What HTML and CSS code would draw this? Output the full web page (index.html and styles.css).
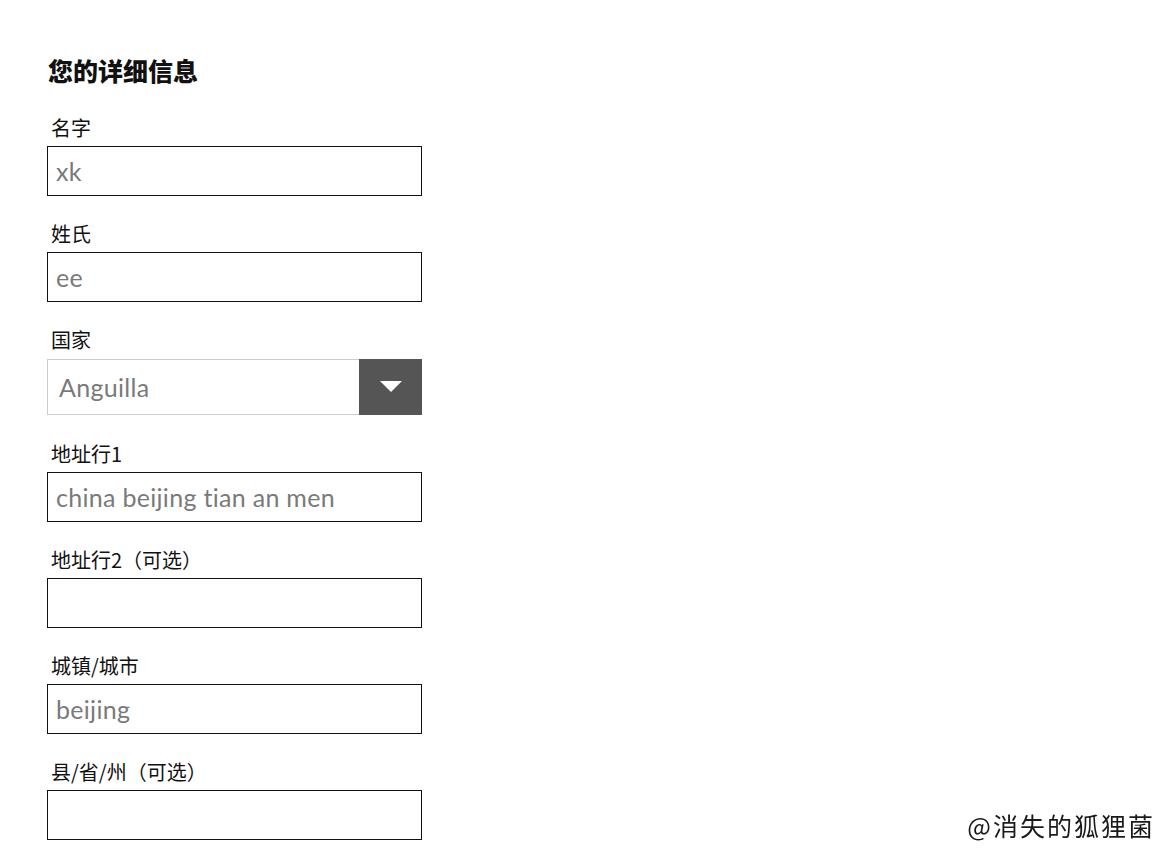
FILE: index.html
```html
<!DOCTYPE html>
<html lang="zh-CN">
<head>
  <meta charset="UTF-8">
  <meta name="viewport" content="width=device-width, initial-scale=1.0">
  <title>您的详细信息</title>
  <link rel="stylesheet" href="styles.css">
</head>
<body>
  <form class="details">
    <h2>您的详细信息</h2>

    <div class="field">
      <label for="firstName">名字</label>
      <input type="text" id="firstName" value="xk">
    </div>

    <div class="field">
      <label for="lastName">姓氏</label>
      <input type="text" id="lastName" value="ee">
    </div>

    <div class="field field-select">
      <label for="country">国家</label>
      <div class="select-box">
        <select id="country">
          <option>Anguilla</option>
          <option>China</option>
        </select>
        <span class="arrow">
          <svg width="22" height="12" viewBox="0 0 22 12"><path d="M0 0 H22 L11 11 Z" fill="#fff"/></svg>
        </span>
      </div>
    </div>

    <div class="field">
      <label for="address1">地址行1</label>
      <input type="text" id="address1" value="china beijing tian an men">
    </div>

    <div class="field">
      <label for="address2">地址行2（可选）</label>
      <input type="text" id="address2">
    </div>

    <div class="field">
      <label for="city">城镇/城市</label>
      <input type="text" id="city" value="beijing">
    </div>

    <div class="field">
      <label for="state">县/省/州（可选）</label>
      <input type="text" id="state">
    </div>
  </form>

  <div class="watermark">@消失的狐狸菌</div>
</body>
</html>
```

FILE: styles.css
```css
body {
  margin: 0;
  padding: 55px 47px 0;
  background: #fff;
  font-family: "Noto Sans CJK SC", sans-serif;
  color: #111;
}
.details {
  width: 375px;
}
h2 {
  margin: 0 0 26px 1px;
  font-size: 25px;
  line-height: 30px;
  font-weight: 900;
}
.field {
  margin-bottom: 21px;
}
.field-select {
  margin-bottom: 22px;
}
.field label {
  display: block;
  padding: 3px 0 0 4px;
  margin-bottom: 4px;
  font-size: 20px;
  line-height: 28px;
  height: 28px;
  color: #111;
}
.field-select label {
  margin-bottom: 5px;
}
input[type=text] {
  box-sizing: border-box;
  display: block;
  width: 375px;
  height: 50px;
  margin: 0;
  padding: 0 8px;
  border: 1px solid #111;
  border-radius: 0;
  font-family: "Lato", sans-serif;
  font-size: 25px;
  letter-spacing: 0.3px;
  color: #7a7a7a;
  outline: none;
}
.select-box {
  box-sizing: border-box;
  display: flex;
  width: 375px;
  height: 56px;
  border: 1px solid #ccc;
}
.select-box select {
  flex: 1;
  appearance: none;
  -webkit-appearance: none;
  border: none;
  background: #fff;
  padding: 0 11px;
  font-family: "Lato", sans-serif;
  font-size: 25px;
  letter-spacing: 0.3px;
  color: #7a7a7a;
  outline: none;
}
.arrow {
  width: 63px;
  margin: -1px -1px -1px 0;
  background: #555;
  display: flex;
  align-items: center;
  justify-content: center;
}
.watermark {
  position: fixed;
  right: 14px;
  bottom: 12px;
  font-size: 25px;
  color: #1a1a1a;
  letter-spacing: 2px;
}
```
